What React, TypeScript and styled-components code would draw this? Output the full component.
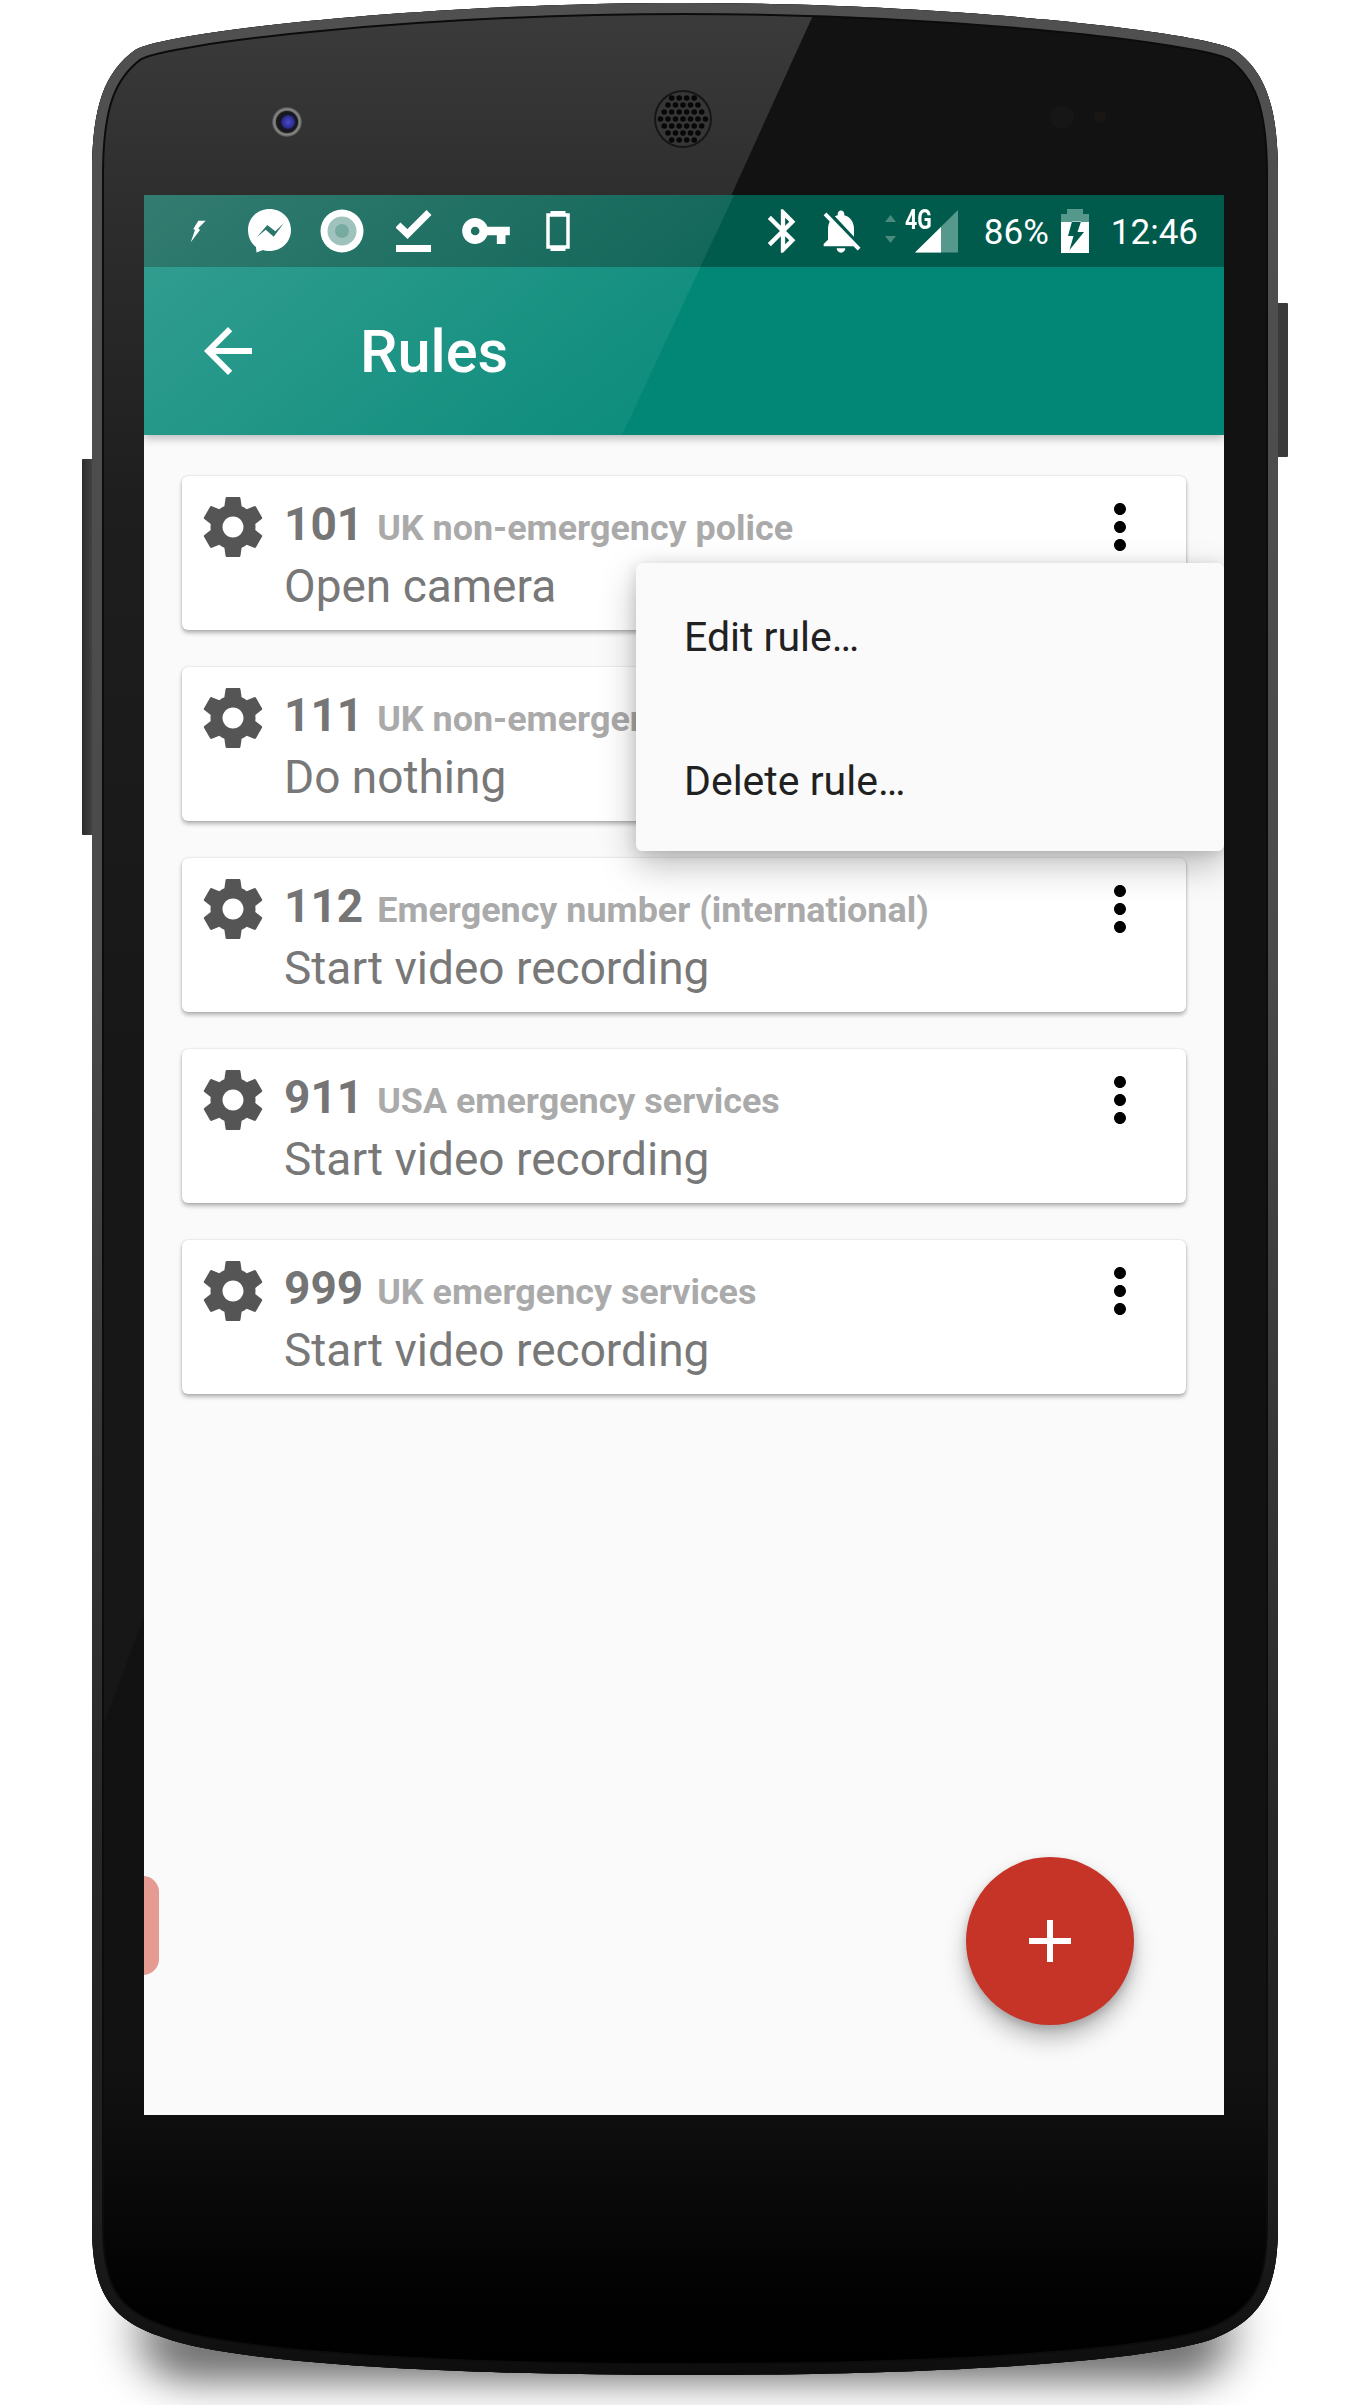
import React from 'react'
import styled, { createGlobalStyle } from 'styled-components'

const GlobalStyle = createGlobalStyle`
  html, body {
    margin: 0;
    padding: 0;
    background: #fff;
  }
`

const Page = styled.div`
  position: relative;
  box-sizing: border-box;
  width: 1370px;
  height: 2405px;
  padding: 195px 146px 290px 144px;
  overflow: hidden;
  background: #fff;
  font-family: Roboto, "Liberation Sans", sans-serif;
`

const PhoneArt = styled.svg`
  position: absolute;
  top: 0;
  left: 0;
`

const Screen = styled.div`
  position: relative;
  display: flex;
  flex-direction: column;
  width: 1080px;
  height: 1920px;
  overflow: hidden;
  background: #fafafa;
`

const Header = styled.header`
  position: relative;
  z-index: 2;
  box-shadow: 0 3px 9px rgba(0, 0, 0, 0.28);
`

const HeaderGlare = styled.svg`
  position: absolute;
  top: 0;
  left: 0;
  pointer-events: none;
`

const StatusBar = styled.div`
  display: flex;
  align-items: center;
  height: 72px;
  padding: 0 26px 0 18px;
  background: #005b4d;
  color: #fff;
`

const StatusCell = styled.div`
  display: flex;
  align-items: center;
  justify-content: center;
  width: 72px;
  height: 72px;
`

const StatusRight = styled.div`
  display: flex;
  align-items: center;
  margin-left: auto;
`

const RightSlot = styled.div<{ $ml: number }>`
  display: flex;
  align-items: center;
  margin-left: ${(p) => p.$ml}px;
`

const StatusText = styled.span`
  padding-top: 3px;
  font-size: 35px;
  line-height: 69px;
  font-weight: 400;
  color: #fff;
`

const Signal = styled.div`
  position: relative;
  width: 73px;
  height: 44px;
`

const NetworkLabel = styled.span`
  position: absolute;
  top: -5px;
  left: 20px;
  font-size: 28px;
  line-height: 32px;
  font-weight: 700;
  color: #fff;
  transform: scaleX(0.76);
  transform-origin: left top;
`

const AppBar = styled.div`
  display: flex;
  align-items: center;
  height: 168px;
  padding-left: 48px;
  background: #028776;
  color: #fff;
`

const Title = styled.h1`
  margin: 2px 0 0 96px;
  font-size: 59.5px;
  font-weight: 500;
  color: #fff;
`

const Content = styled.main`
  display: flex;
  flex-direction: column;
  gap: 37px;
  padding: 41px 38px;
`

const Card = styled.article`
  display: flex;
  align-items: flex-start;
  box-sizing: border-box;
  height: 154px;
  padding: 15px 30px 0 15px;
  background: #fff;
  border-radius: 6px;
  box-shadow: 0 3px 4px rgba(0, 0, 0, 0.28), 0 0 2px rgba(0, 0, 0, 0.18);
`

const CardText = styled.div`
  flex: 1;
  min-width: 0;
  margin-left: 15px;
`

const TopLine = styled.div`
  display: flex;
  align-items: baseline;
  height: 66px;
  line-height: 66px;
  white-space: nowrap;
`

const RuleNumber = styled.span`
  font-size: 46px;
  font-weight: 700;
  color: #757575;
`

const RuleLabel = styled.span`
  margin-left: 14px;
  font-size: 35.9px;
  font-weight: 700;
  color: #aaaaaa;
`

const RuleAction = styled.div`
  font-size: 46px;
  line-height: 58px;
  color: #787878;
`

const PopupMenu = styled.div`
  position: absolute;
  top: 368px;
  right: 0;
  z-index: 3;
  width: 588px;
  background: #fafafa;
  border-radius: 6px;
  box-shadow: 0 14px 36px rgba(0, 0, 0, 0.26), 0 2px 14px rgba(0, 0, 0, 0.12);
`

const MenuItem = styled.div`
  display: flex;
  align-items: center;
  box-sizing: border-box;
  height: 144px;
  padding: 4px 0 0 48px;
  font-size: 41px;
  color: #212121;
`

const Fab = styled.button`
  position: absolute;
  top: 1662px;
  left: 822px;
  display: flex;
  align-items: center;
  justify-content: center;
  width: 168px;
  height: 168px;
  padding: 0;
  border: none;
  border-radius: 50%;
  background: #c63327;
  box-shadow: 0 14px 22px rgba(0, 0, 0, 0.25), 0 4px 8px rgba(0, 0, 0, 0.16);
`

const SideTab = styled.div`
  position: absolute;
  top: 1681px;
  left: -30px;
  width: 45px;
  height: 99px;
  border-radius: 16px;
  background: #e59a92;
`

const GEAR =
  'M19.43 12.98c.04-.32.07-.64.07-.98s-.03-.66-.07-.98l2.11-1.65c.19-.15.24-.42.12-.64l-2-3.46c-.12-.22-.39-.3-.61-.22l-2.49 1c-.52-.4-1.08-.73-1.69-.98l-.38-2.65C14.46 2.18 14.25 2 14 2h-4c-.25 0-.46.18-.49.42l-.38 2.65c-.61.25-1.17.59-1.69.98l-2.49-1c-.23-.09-.49 0-.61.22l-2 3.46c-.13.22-.07.49.12.64l2.11 1.65c-.04.32-.07.65-.07.98s.03.66.07.98l-2.11 1.65c-.19.15-.24.42-.12.64l2 3.46c.12.22.39.3.61.22l2.49-1c.52.4 1.08.73 1.69.98l.38 2.65c.03.24.24.42.49.42h4c.25 0 .46-.18.49-.42l.38-2.65c.61-.25 1.17-.59 1.69-.98l2.49 1c.23.09.49 0 .61-.22l2-3.46c.12-.22.07-.49-.12-.64l-2.11-1.65zM12 15.5c-1.93 0-3.5-1.57-3.5-3.5s1.57-3.5 3.5-3.5 3.5 1.57 3.5 3.5-1.57 3.5-3.5 3.5z'
const MORE =
  'M12 8c1.1 0 2-.9 2-2s-.9-2-2-2-2 .9-2 2 .9 2 2 2zm0 2c-1.1 0-2 .9-2 2s.9 2 2 2 2-.9 2-2-.9-2-2-2zm0 6c-1.1 0-2 .9-2 2s.9 2 2 2 2-.9 2-2-.9-2-2-2z'
const BODY =
  'M92 175C92 105 105 72 135 50C165 32 420 3 685 3C950 3 1205 32 1235 50C1265 72 1278 105 1278 175L1278 2225C1278 2290 1262 2320 1210 2340C1130 2365 900 2375 685 2375C470 2375 240 2365 165 2338C108 2320 92 2290 92 2225Z'

const rules = [
  { id: '101', label: 'UK non-emergency police', action: 'Open camera' },
  { id: '111', label: 'UK non-emergency', action: 'Do nothing' },
  { id: '112', label: 'Emergency number (international)', action: 'Start video recording' },
  { id: '911', label: 'USA emergency services', action: 'Start video recording' },
  { id: '999', label: 'UK emergency services', action: 'Start video recording' },
]

// hex lattice of the earpiece holes
const grilleDots: { x: number; y: number }[] = []
for (let row = -4; row <= 4; row++) {
  for (let col = -4; col <= 4; col++) {
    const x = col * 7.5 + (row % 2 ? 3.7 : 0)
    const y = row * 7
    if (x * x + y * y < 600) grilleDots.push({ x, y })
  }
}

const Phone = () => (
  <PhoneArt width="1370" height="2405" viewBox="0 0 1370 2405">
    <defs>
      <clipPath id="bodyClip">
        <path d={BODY} />
      </clipPath>
      <filter id="dropBlur" x="-10%" y="-50%" width="120%" height="200%">
        <feGaussianBlur stdDeviation="22" />
      </filter>
      <linearGradient id="dropFill" x1="0" y1="2180" x2="0" y2="2375" gradientUnits="userSpaceOnUse">
        <stop offset="0" stopColor="#000" stopOpacity="0" />
        <stop offset="0.6" stopColor="#000" stopOpacity="0.18" />
        <stop offset="1" stopColor="#000" stopOpacity="0.85" />
      </linearGradient>
      <linearGradient id="bezelFill" x1="0" y1="0" x2="0" y2="2405" gradientUnits="userSpaceOnUse">
        <stop offset="0" stopColor="#121212" />
        <stop offset="0.86" stopColor="#121212" />
        <stop offset="0.96" stopColor="#010101" />
        <stop offset="1" stopColor="#000" />
      </linearGradient>
      <linearGradient id="bezelGlare" x1="0" y1="20" x2="0" y2="1100" gradientUnits="userSpaceOnUse">
        <stop offset="0" stopColor="#fff" stopOpacity="0.17" />
        <stop offset="0.16" stopColor="#fff" stopOpacity="0.12" />
        <stop offset="0.45" stopColor="#fff" stopOpacity="0.05" />
        <stop offset="1" stopColor="#fff" stopOpacity="0.02" />
      </linearGradient>
      <linearGradient id="rimFill" x1="0" y1="0" x2="0" y2="2405" gradientUnits="userSpaceOnUse">
        <stop offset="0" stopColor="#505050" />
        <stop offset="0.4" stopColor="#4a4a4a" />
        <stop offset="0.75" stopColor="#282828" />
        <stop offset="0.92" stopColor="#1f1f1f" />
        <stop offset="0.97" stopColor="#121212" />
        <stop offset="1" stopColor="#0a0a0a" />
      </linearGradient>
      <linearGradient id="keyFill" x1="0" y1="0" x2="1" y2="0">
        <stop offset="0" stopColor="#2c2c2c" />
        <stop offset="1" stopColor="#4a4a4a" />
      </linearGradient>
      <radialGradient id="lens" cx="0.55" cy="0.5" r="0.5">
        <stop offset="0" stopColor="#4a4ac8" />
        <stop offset="0.5" stopColor="#2f2f96" />
        <stop offset="0.72" stopColor="#151520" />
        <stop offset="1" stopColor="#1c1c1c" />
      </radialGradient>
      <radialGradient id="lensRing">
        <stop offset="0.6" stopColor="#222" />
        <stop offset="0.85" stopColor="#8a8a8a" />
        <stop offset="1" stopColor="#4a4a4a" />
      </radialGradient>
    </defs>

    <rect x="135" y="2190" width="1100" height="185" rx="50" fill="url(#dropFill)" filter="url(#dropBlur)" />

    <rect x="82" y="459" width="14" height="376" rx="1" fill="url(#keyFill)" />
    <rect x="1274" y="303" width="14" height="154" rx="1" fill="#3a3a3a" />

    <path d={BODY} fill="url(#bezelFill)" />
    <g clipPath="url(#bodyClip)">
      <polygon points="0,0 820,0 620,440 300,1200 0,2000" fill="url(#bezelGlare)" />
      <path d={BODY} fill="none" stroke="#0c0c0c" strokeWidth="24" />
      <path d={BODY} fill="none" stroke="url(#rimFill)" strokeWidth="20" />
    </g>

    <circle cx="287" cy="122" r="15" fill="url(#lensRing)" />
    <circle cx="287" cy="122" r="11" fill="url(#lens)" />

    <circle cx="683" cy="119" r="29" fill="#161616" />
    <circle cx="683" cy="119" r="27" fill="#363636" />
    {grilleDots.map((d) => (
      <circle key={`${d.x}-${d.y}`} cx={683 + d.x} cy={119 + d.y} r="2.8" fill="#070707" />
    ))}

    <circle cx="1062" cy="117" r="12" fill="#161616" />
    <circle cx="1100" cy="117" r="6" fill="#191614" />
  </PhoneArt>
)

const Messenger = () => (
  <svg width="44" height="44" viewBox="0 0 44 44">
    <path
      fillRule="evenodd"
      fill="#fff"
      d="M21.5 0C33.5 0 43 9 43 21S33.5 42 21.5 42C19 42 17 41.6 15 41L8.5 43.5L8 38C3 34 0 28 0 21C0 9 9.5 0 21.5 0ZM9 28L19.3 16L27.3 22.3L35.7 14.3L25.7 27.7L17.7 20.7Z"
    />
  </svg>
)

const Target = () => (
  <svg width="44" height="44" viewBox="0 0 44 44">
    <circle cx="22" cy="22" r="21.5" fill="#fff" />
    <circle cx="22" cy="22" r="14.5" fill="#8db8b0" />
    <circle cx="22" cy="22" r="7" fill="#5f9c90" />
  </svg>
)

const CheckBar = () => (
  <svg width="36" height="42" viewBox="0 0 36 42">
    <polyline points="2,15 11.5,24 33,2.5" fill="none" stroke="#fff" strokeWidth="7" />
    <rect x="0" y="35" width="35" height="7" fill="#fff" />
  </svg>
)

const Key = () => (
  <svg width="52" height="52" viewBox="0 0 24 24">
    <path
      fill="#fff"
      d="M12.65 10C11.83 7.67 9.61 6 7 6c-3.31 0-6 2.69-6 6s2.69 6 6 6c2.61 0 4.83-1.67 5.65-4H17v4h4v-4h2v-4H12.65zM7 14c-1.1 0-2-.9-2-2s.9-2 2-2 2 .9 2 2-.9 2-2 2z"
    />
  </svg>
)

const Watch = () => (
  <svg width="24" height="40" viewBox="0 0 24 40">
    <rect x="4.5" y="0" width="15" height="4" fill="#fff" />
    <rect x="4.5" y="36" width="15" height="4" fill="#fff" />
    <rect x="2" y="4" width="20" height="32" fill="none" stroke="#fff" strokeWidth="3.5" />
  </svg>
)

const Bolt = () => (
  <svg width="16" height="23" viewBox="0 0 16 23">
    <polygon fill="#fff" points="15.7,0.7 8.3,0.7 3.3,9 5,10 0.7,22.3 10,10 8.3,8.3" />
  </svg>
)

const Bluetooth = () => (
  <svg width="52" height="52" viewBox="0 0 24 24">
    <path
      fill="#fff"
      d="M17.71 7.71L12 2h-1v7.59L6.41 5 5 6.41 10.59 12 5 17.59 6.41 19 11 14.41V22h1l5.71-5.71-4.3-4.29 4.3-4.29zM13 5.83l1.88 1.88L13 9.59V5.83zm1.88 10.46L13 18.17v-3.76l1.88 1.88z"
    />
  </svg>
)

const BellOff = () => (
  <svg width="52" height="52" viewBox="0 0 24 24">
    <path
      fill="#fff"
      d="M20 18.69L7.84 6.14 5.27 3.49 4 4.76l2.8 2.8v.01c-.52.99-.8 2.16-.8 3.42v5l-2 2v1h13.73l2 2L21 19.72l-1-1.03zM12 22c1.11 0 2-.89 2-2h-4c0 1.11.89 2 2 2zm6-7.32V11c0-3.08-1.64-5.64-4.5-6.32V4c0-.83-.67-1.5-1.5-1.5s-1.5.67-1.5 1.5v.68c-.15.03-.29.08-.42.12-.1.03-.2.07-.3.11h-.01c-.2.08-.4.17-.59.27-.01 0-.01 0-.01.01L18 14.68z"
    />
  </svg>
)

const SignalArt = () => (
  <svg width="73" height="44" viewBox="0 0 73 44">
    <polygon points="0,13 5.5,6 11,13" fill="#4c8a7e" />
    <polygon points="0,27 11,27 5.5,34" fill="#4c8a7e" />
    <polygon points="73,1 73,43.5 30,43.5" fill="#56988c" />
    <polygon points="56,18 56,43.5 30,43.5" fill="#fff" />
  </svg>
)

const Battery = () => (
  <svg width="28" height="44" viewBox="0 0 28 44">
    <rect x="6" y="0" width="16" height="5" fill="#56988c" />
    <rect x="0" y="5" width="28" height="8" fill="#56988c" />
    <path
      fill="#fff"
      fillRule="evenodd"
      d="M0 13H28V44H0ZM11 12.5H20L16.5 23H23L8.5 41L12.5 27H7Z"
    />
  </svg>
)

const iconPath = (d: string, size: number, fill: string) => (
  <svg width={size} height={size} viewBox="0 0 24 24" style={{ flexShrink: 0, display: 'block' }}>
    <path d={d} fill={fill} />
  </svg>
)

const App: React.FC = () => {
  return (
    <Page>
      <GlobalStyle />
      <Phone />
      <Screen>
        <Header>
          <StatusBar>
            <StatusCell><Bolt /></StatusCell>
            <StatusCell><Messenger /></StatusCell>
            <StatusCell><Target /></StatusCell>
            <StatusCell><CheckBar /></StatusCell>
            <StatusCell><Key /></StatusCell>
            <StatusCell><Watch /></StatusCell>
            <StatusRight>
              <RightSlot $ml={0}><Bluetooth /></RightSlot>
              <RightSlot $ml={6.5}><BellOff /></RightSlot>
              <RightSlot $ml={17.5}>
                <Signal>
                  <SignalArt />
                  <NetworkLabel>4G</NetworkLabel>
                </Signal>
              </RightSlot>
              <RightSlot $ml={26}><StatusText>86%</StatusText></RightSlot>
              <RightSlot $ml={12}><Battery /></RightSlot>
              <RightSlot $ml={22}><StatusText>12:46</StatusText></RightSlot>
            </StatusRight>
          </StatusBar>
          <AppBar>
            <svg width="72" height="72" viewBox="0 0 24 24">
              <path fill="#fff" d="M20 11H7.83l5.59-5.59L12 4l-8 8 8 8 1.41-1.41L7.83 13H20v-2z" />
            </svg>
            <Title>Rules</Title>
          </AppBar>
          <HeaderGlare width="1080" height="240" viewBox="0 0 1080 240">
            <defs>
              <linearGradient id="headerGlare" x1="0" y1="0" x2="400" y2="500" gradientUnits="userSpaceOnUse">
                <stop offset="0" stopColor="#fff" stopOpacity="0.2" />
                <stop offset="1" stopColor="#fff" stopOpacity="0" />
              </linearGradient>
            </defs>
            <polygon points="0,0 590,0 478,240 0,240" fill="url(#headerGlare)" />
          </HeaderGlare>
        </Header>

        <Content>
          {rules.map((r) => (
            <Card key={r.id}>
              {iconPath(GEAR, 72, '#555555')}
              <CardText>
                <TopLine>
                  <RuleNumber>{r.id}</RuleNumber>
                  <RuleLabel>{r.label}</RuleLabel>
                </TopLine>
                <RuleAction>{r.action}</RuleAction>
              </CardText>
              {iconPath(MORE, 72, '#000000')}
            </Card>
          ))}
        </Content>

        <PopupMenu>
          <MenuItem>Edit rule…</MenuItem>
          <MenuItem>Delete rule…</MenuItem>
        </PopupMenu>

        <SideTab />
        <Fab aria-label="Add rule">
          <svg width="72" height="72" viewBox="0 0 24 24">
            <path fill="#fff" d="M19 13h-6v6h-2v-6H5v-2h6V5h2v6h6v2z" />
          </svg>
        </Fab>
      </Screen>
    </Page>
  )
}

export default App
